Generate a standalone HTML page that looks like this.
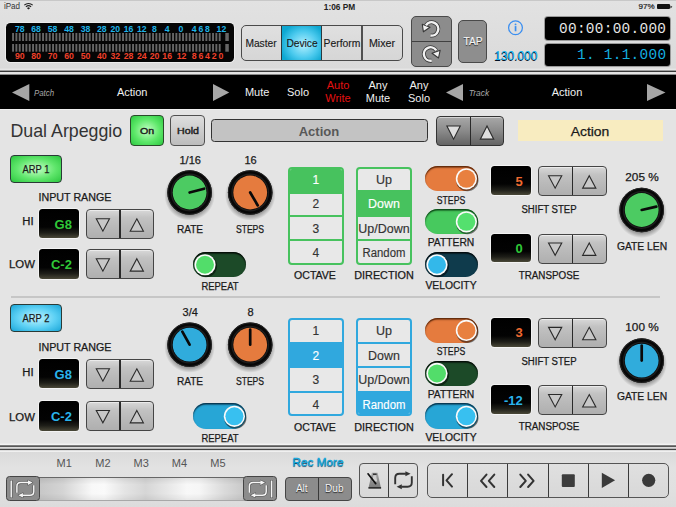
<!DOCTYPE html><html><head><meta charset="utf-8"><style>
html,body{margin:0;padding:0;}
body{width:676px;height:507px;overflow:hidden;position:relative;background:#e4e4e4;font-family:"Liberation Sans", sans-serif;}
div{box-sizing:border-box;}
svg{position:absolute;overflow:visible;}
</style></head><body>
<div style="position:absolute;left:0px;top:0px;width:676px;height:70px;background:linear-gradient(#e2e2e2,#dadada);"></div>
<div style="position:absolute;left:0px;top:0px;width:676px;height:1px;background:#c8c8c8;"></div>
<svg style="left:0;top:66px" width="676" height="12" viewBox="0 66 676 12"><rect x="0" y="68.6" width="676" height="2" fill="#e6e6e6"/><rect x="0" y="70.6" width="676" height="1.5" fill="#383838"/><rect x="0" y="72.1" width="676" height="2.5" fill="#e4e4e4"/><rect x="0" y="74.6" width="676" height="3.4" fill="#000"/></svg>
<div style="position:absolute;left:0px;top:75px;width:676px;height:34px;background:#000;"></div>
<div style="position:absolute;left:0px;top:109px;width:676px;height:1px;background:#efefef;"></div>
<div style="position:absolute;left:-88.2px;top:2.3499999999999996px;width:200px;text-align:center;font-size:8.5px;line-height:8.5px;color:#333;font-weight:normal;white-space:nowrap;transform:scaleX(0.949);">iPad</div>
<svg style="left:24px;top:3px" width="9" height="7" viewBox="0 0 9 7"><path d="M0.3 2.2 A6 6 0 0 1 8.7 2.2" stroke="#222" stroke-width="1.1" fill="none"/><path d="M1.9 3.9 A3.8 3.8 0 0 1 7.1 3.9" stroke="#222" stroke-width="1.1" fill="none"/><path d="M4.5 6.6 L3 5.2 A2 2 0 0 1 6 5.2 Z" fill="#222"/></svg>
<div style="position:absolute;left:309.5px;top:2px;width:60px;text-align:center;font-size:8.3px;line-height:8.3px;color:#222;font-weight:bold;white-space:nowrap;line-height:10px;">1:06 PM</div>
<div style="position:absolute;left:614.5px;top:2px;width:40px;text-align:right;font-size:8px;line-height:8px;color:#1a1a1a;font-weight:normal;white-space:nowrap;line-height:10px;-webkit-text-stroke:0.2px #1a1a1a;">97%</div>
<div style="position:absolute;left:656.5px;top:4.3px;width:13.5px;height:5px;background:#111;border-radius:1px;"></div>
<svg style="left:670px;top:5px" width="4" height="4" viewBox="0 0 4 4"><path d="M0.4 0.4 L2.4 1.8 L0.4 3.4 Z" fill="#333"/></svg>
<div style="position:absolute;left:6.2px;top:23.2px;width:227.8px;height:38.4px;background:#050505;border-radius:4.5px;box-shadow:0 0 0 1px #ececec;"></div>
<svg style="left:0;top:0" width="676" height="70" viewBox="0 0 676 70"><rect x="12.100" y="33" width="1.9" height="8" fill="#666"/><rect x="12.100" y="44" width="1.9" height="7.7" fill="#666"/><rect x="15.433" y="33" width="1.9" height="8" fill="#666"/><rect x="15.433" y="44" width="1.9" height="7.7" fill="#666"/><rect x="18.766" y="33" width="1.9" height="8" fill="#666"/><rect x="18.766" y="44" width="1.9" height="7.7" fill="#666"/><rect x="22.099" y="33" width="1.9" height="8" fill="#666"/><rect x="22.099" y="44" width="1.9" height="7.7" fill="#666"/><rect x="25.432" y="33" width="1.9" height="8" fill="#666"/><rect x="25.432" y="44" width="1.9" height="7.7" fill="#666"/><rect x="28.765" y="33" width="1.9" height="8" fill="#666"/><rect x="28.765" y="44" width="1.9" height="7.7" fill="#666"/><rect x="32.098" y="33" width="1.9" height="8" fill="#666"/><rect x="32.098" y="44" width="1.9" height="7.7" fill="#666"/><rect x="35.431" y="33" width="1.9" height="8" fill="#666"/><rect x="35.431" y="44" width="1.9" height="7.7" fill="#666"/><rect x="38.764" y="33" width="1.9" height="8" fill="#666"/><rect x="38.764" y="44" width="1.9" height="7.7" fill="#666"/><rect x="42.097" y="33" width="1.9" height="8" fill="#666"/><rect x="42.097" y="44" width="1.9" height="7.7" fill="#666"/><rect x="45.430" y="33" width="1.9" height="8" fill="#666"/><rect x="45.430" y="44" width="1.9" height="7.7" fill="#666"/><rect x="48.763" y="33" width="1.9" height="8" fill="#666"/><rect x="48.763" y="44" width="1.9" height="7.7" fill="#666"/><rect x="52.096" y="33" width="1.9" height="8" fill="#666"/><rect x="52.096" y="44" width="1.9" height="7.7" fill="#666"/><rect x="55.429" y="33" width="1.9" height="8" fill="#666"/><rect x="55.429" y="44" width="1.9" height="7.7" fill="#666"/><rect x="58.762" y="33" width="1.9" height="8" fill="#666"/><rect x="58.762" y="44" width="1.9" height="7.7" fill="#666"/><rect x="62.095" y="33" width="1.9" height="8" fill="#666"/><rect x="62.095" y="44" width="1.9" height="7.7" fill="#666"/><rect x="65.428" y="33" width="1.9" height="8" fill="#666"/><rect x="65.428" y="44" width="1.9" height="7.7" fill="#666"/><rect x="68.761" y="33" width="1.9" height="8" fill="#666"/><rect x="68.761" y="44" width="1.9" height="7.7" fill="#666"/><rect x="72.094" y="33" width="1.9" height="8" fill="#666"/><rect x="72.094" y="44" width="1.9" height="7.7" fill="#666"/><rect x="75.427" y="33" width="1.9" height="8" fill="#666"/><rect x="75.427" y="44" width="1.9" height="7.7" fill="#666"/><rect x="78.760" y="33" width="1.9" height="8" fill="#666"/><rect x="78.760" y="44" width="1.9" height="7.7" fill="#666"/><rect x="82.093" y="33" width="1.9" height="8" fill="#666"/><rect x="82.093" y="44" width="1.9" height="7.7" fill="#666"/><rect x="85.426" y="33" width="1.9" height="8" fill="#666"/><rect x="85.426" y="44" width="1.9" height="7.7" fill="#666"/><rect x="88.759" y="33" width="1.9" height="8" fill="#666"/><rect x="88.759" y="44" width="1.9" height="7.7" fill="#666"/><rect x="92.092" y="33" width="1.9" height="8" fill="#666"/><rect x="92.092" y="44" width="1.9" height="7.7" fill="#666"/><rect x="95.425" y="33" width="1.9" height="8" fill="#666"/><rect x="95.425" y="44" width="1.9" height="7.7" fill="#666"/><rect x="98.758" y="33" width="1.9" height="8" fill="#666"/><rect x="98.758" y="44" width="1.9" height="7.7" fill="#666"/><rect x="102.091" y="33" width="1.9" height="8" fill="#666"/><rect x="102.091" y="44" width="1.9" height="7.7" fill="#666"/><rect x="105.424" y="33" width="1.9" height="8" fill="#666"/><rect x="105.424" y="44" width="1.9" height="7.7" fill="#666"/><rect x="108.757" y="33" width="1.9" height="8" fill="#666"/><rect x="108.757" y="44" width="1.9" height="7.7" fill="#666"/><rect x="112.090" y="33" width="1.9" height="8" fill="#666"/><rect x="112.090" y="44" width="1.9" height="7.7" fill="#666"/><rect x="115.423" y="33" width="1.9" height="8" fill="#666"/><rect x="115.423" y="44" width="1.9" height="7.7" fill="#666"/><rect x="118.756" y="33" width="1.9" height="8" fill="#666"/><rect x="118.756" y="44" width="1.9" height="7.7" fill="#666"/><rect x="122.089" y="33" width="1.9" height="8" fill="#666"/><rect x="122.089" y="44" width="1.9" height="7.7" fill="#666"/><rect x="125.422" y="33" width="1.9" height="8" fill="#666"/><rect x="125.422" y="44" width="1.9" height="7.7" fill="#666"/><rect x="128.755" y="33" width="1.9" height="8" fill="#666"/><rect x="128.755" y="44" width="1.9" height="7.7" fill="#666"/><rect x="132.088" y="33" width="1.9" height="8" fill="#666"/><rect x="132.088" y="44" width="1.9" height="7.7" fill="#666"/><rect x="135.421" y="33" width="1.9" height="8" fill="#666"/><rect x="135.421" y="44" width="1.9" height="7.7" fill="#666"/><rect x="138.754" y="33" width="1.9" height="8" fill="#666"/><rect x="138.754" y="44" width="1.9" height="7.7" fill="#666"/><rect x="142.087" y="33" width="1.9" height="8" fill="#666"/><rect x="142.087" y="44" width="1.9" height="7.7" fill="#666"/><rect x="145.420" y="33" width="1.9" height="8" fill="#666"/><rect x="145.420" y="44" width="1.9" height="7.7" fill="#666"/><rect x="148.753" y="33" width="1.9" height="8" fill="#666"/><rect x="148.753" y="44" width="1.9" height="7.7" fill="#666"/><rect x="152.086" y="33" width="1.9" height="8" fill="#666"/><rect x="152.086" y="44" width="1.9" height="7.7" fill="#666"/><rect x="155.419" y="33" width="1.9" height="8" fill="#666"/><rect x="155.419" y="44" width="1.9" height="7.7" fill="#666"/><rect x="158.752" y="33" width="1.9" height="8" fill="#666"/><rect x="158.752" y="44" width="1.9" height="7.7" fill="#666"/><rect x="162.085" y="33" width="1.9" height="8" fill="#666"/><rect x="162.085" y="44" width="1.9" height="7.7" fill="#666"/><rect x="165.418" y="33" width="1.9" height="8" fill="#666"/><rect x="165.418" y="44" width="1.9" height="7.7" fill="#666"/><rect x="168.751" y="33" width="1.9" height="8" fill="#666"/><rect x="168.751" y="44" width="1.9" height="7.7" fill="#666"/><rect x="172.084" y="33" width="1.9" height="8" fill="#666"/><rect x="172.084" y="44" width="1.9" height="7.7" fill="#666"/><rect x="175.417" y="33" width="1.9" height="8" fill="#666"/><rect x="175.417" y="44" width="1.9" height="7.7" fill="#666"/><rect x="178.750" y="33" width="1.9" height="8" fill="#666"/><rect x="178.750" y="44" width="1.9" height="7.7" fill="#666"/><rect x="182.083" y="33" width="1.9" height="8" fill="#666"/><rect x="182.083" y="44" width="1.9" height="7.7" fill="#666"/><rect x="185.416" y="33" width="1.9" height="8" fill="#666"/><rect x="185.416" y="44" width="1.9" height="7.7" fill="#666"/><rect x="188.749" y="33" width="1.9" height="8" fill="#666"/><rect x="188.749" y="44" width="1.9" height="7.7" fill="#666"/><rect x="192.082" y="33" width="1.9" height="8" fill="#666"/><rect x="192.082" y="44" width="1.9" height="7.7" fill="#666"/><rect x="195.415" y="33" width="1.9" height="8" fill="#666"/><rect x="195.415" y="44" width="1.9" height="7.7" fill="#666"/><rect x="198.748" y="33" width="1.9" height="8" fill="#666"/><rect x="198.748" y="44" width="1.9" height="7.7" fill="#666"/><rect x="202.081" y="33" width="1.9" height="8" fill="#666"/><rect x="202.081" y="44" width="1.9" height="7.7" fill="#666"/><rect x="205.414" y="33" width="1.9" height="8" fill="#666"/><rect x="205.414" y="44" width="1.9" height="7.7" fill="#666"/><rect x="208.747" y="33" width="1.9" height="8" fill="#666"/><rect x="208.747" y="44" width="1.9" height="7.7" fill="#666"/><rect x="212.080" y="33" width="1.9" height="8" fill="#666"/><rect x="212.080" y="44" width="1.9" height="7.7" fill="#666"/><rect x="215.413" y="33" width="1.9" height="8" fill="#666"/><rect x="215.413" y="44" width="1.9" height="7.7" fill="#666"/><rect x="218.746" y="33" width="1.9" height="8" fill="#666"/><rect x="218.746" y="44" width="1.9" height="7.7" fill="#666"/><rect x="225.3" y="33" width="3.5" height="8" fill="#666"/><rect x="225.3" y="44" width="3.5" height="7.7" fill="#666"/></svg>
<div style="position:absolute;left:-80.2px;top:24.549999999999997px;width:200px;text-align:center;font-size:8.7px;line-height:8.7px;color:#1fb4e8;font-weight:bold;white-space:nowrap;">78</div>
<div style="position:absolute;left:-64.0px;top:24.549999999999997px;width:200px;text-align:center;font-size:8.7px;line-height:8.7px;color:#1fb4e8;font-weight:bold;white-space:nowrap;">68</div>
<div style="position:absolute;left:-47.4px;top:24.549999999999997px;width:200px;text-align:center;font-size:8.7px;line-height:8.7px;color:#1fb4e8;font-weight:bold;white-space:nowrap;">58</div>
<div style="position:absolute;left:-31.0px;top:24.549999999999997px;width:200px;text-align:center;font-size:8.7px;line-height:8.7px;color:#1fb4e8;font-weight:bold;white-space:nowrap;">48</div>
<div style="position:absolute;left:-14.5px;top:24.549999999999997px;width:200px;text-align:center;font-size:8.7px;line-height:8.7px;color:#1fb4e8;font-weight:bold;white-space:nowrap;">38</div>
<div style="position:absolute;left:1.7999999999999972px;top:24.549999999999997px;width:200px;text-align:center;font-size:8.7px;line-height:8.7px;color:#1fb4e8;font-weight:bold;white-space:nowrap;">28</div>
<div style="position:absolute;left:15.299999999999997px;top:24.549999999999997px;width:200px;text-align:center;font-size:8.7px;line-height:8.7px;color:#1fb4e8;font-weight:bold;white-space:nowrap;">20</div>
<div style="position:absolute;left:28.5px;top:24.549999999999997px;width:200px;text-align:center;font-size:8.7px;line-height:8.7px;color:#1fb4e8;font-weight:bold;white-space:nowrap;">16</div>
<div style="position:absolute;left:41.80000000000001px;top:24.549999999999997px;width:200px;text-align:center;font-size:8.7px;line-height:8.7px;color:#1fb4e8;font-weight:bold;white-space:nowrap;">12</div>
<div style="position:absolute;left:54.5px;top:24.549999999999997px;width:200px;text-align:center;font-size:8.7px;line-height:8.7px;color:#1fb4e8;font-weight:bold;white-space:nowrap;">8</div>
<div style="position:absolute;left:67.19999999999999px;top:24.549999999999997px;width:200px;text-align:center;font-size:8.7px;line-height:8.7px;color:#1fb4e8;font-weight:bold;white-space:nowrap;">4</div>
<div style="position:absolute;left:81.0px;top:24.549999999999997px;width:200px;text-align:center;font-size:8.7px;line-height:8.7px;color:#1fb4e8;font-weight:bold;white-space:nowrap;">0</div>
<div style="position:absolute;left:94.19999999999999px;top:24.549999999999997px;width:200px;text-align:center;font-size:8.7px;line-height:8.7px;color:#1fb4e8;font-weight:bold;white-space:nowrap;">4</div>
<div style="position:absolute;left:101.0px;top:24.549999999999997px;width:200px;text-align:center;font-size:8.7px;line-height:8.7px;color:#1fb4e8;font-weight:bold;white-space:nowrap;">6</div>
<div style="position:absolute;left:107.5px;top:24.549999999999997px;width:200px;text-align:center;font-size:8.7px;line-height:8.7px;color:#1fb4e8;font-weight:bold;white-space:nowrap;">8</div>
<div style="position:absolute;left:121.4px;top:24.549999999999997px;width:200px;text-align:center;font-size:8.7px;line-height:8.7px;color:#1fb4e8;font-weight:bold;white-space:nowrap;">12</div>
<div style="position:absolute;left:-80.2px;top:52.449999999999996px;width:200px;text-align:center;font-size:8.7px;line-height:8.7px;color:#f0402a;font-weight:bold;white-space:nowrap;">90</div>
<div style="position:absolute;left:-64.0px;top:52.449999999999996px;width:200px;text-align:center;font-size:8.7px;line-height:8.7px;color:#f0402a;font-weight:bold;white-space:nowrap;">80</div>
<div style="position:absolute;left:-47.4px;top:52.449999999999996px;width:200px;text-align:center;font-size:8.7px;line-height:8.7px;color:#f0402a;font-weight:bold;white-space:nowrap;">70</div>
<div style="position:absolute;left:-31.0px;top:52.449999999999996px;width:200px;text-align:center;font-size:8.7px;line-height:8.7px;color:#f0402a;font-weight:bold;white-space:nowrap;">60</div>
<div style="position:absolute;left:-14.5px;top:52.449999999999996px;width:200px;text-align:center;font-size:8.7px;line-height:8.7px;color:#f0402a;font-weight:bold;white-space:nowrap;">50</div>
<div style="position:absolute;left:1.7999999999999972px;top:52.449999999999996px;width:200px;text-align:center;font-size:8.7px;line-height:8.7px;color:#f0402a;font-weight:bold;white-space:nowrap;">40</div>
<div style="position:absolute;left:15.299999999999997px;top:52.449999999999996px;width:200px;text-align:center;font-size:8.7px;line-height:8.7px;color:#f0402a;font-weight:bold;white-space:nowrap;">32</div>
<div style="position:absolute;left:28.5px;top:52.449999999999996px;width:200px;text-align:center;font-size:8.7px;line-height:8.7px;color:#f0402a;font-weight:bold;white-space:nowrap;">28</div>
<div style="position:absolute;left:41.80000000000001px;top:52.449999999999996px;width:200px;text-align:center;font-size:8.7px;line-height:8.7px;color:#f0402a;font-weight:bold;white-space:nowrap;">24</div>
<div style="position:absolute;left:54.5px;top:52.449999999999996px;width:200px;text-align:center;font-size:8.7px;line-height:8.7px;color:#f0402a;font-weight:bold;white-space:nowrap;">20</div>
<div style="position:absolute;left:67.19999999999999px;top:52.449999999999996px;width:200px;text-align:center;font-size:8.7px;line-height:8.7px;color:#f0402a;font-weight:bold;white-space:nowrap;">16</div>
<div style="position:absolute;left:81.5px;top:52.449999999999996px;width:200px;text-align:center;font-size:8.7px;line-height:8.7px;color:#f0402a;font-weight:bold;white-space:nowrap;">12</div>
<div style="position:absolute;left:94.19999999999999px;top:52.449999999999996px;width:200px;text-align:center;font-size:8.7px;line-height:8.7px;color:#f0402a;font-weight:bold;white-space:nowrap;">8</div>
<div style="position:absolute;left:101.0px;top:52.449999999999996px;width:200px;text-align:center;font-size:8.7px;line-height:8.7px;color:#f0402a;font-weight:bold;white-space:nowrap;">6</div>
<div style="position:absolute;left:107.5px;top:52.449999999999996px;width:200px;text-align:center;font-size:8.7px;line-height:8.7px;color:#f0402a;font-weight:bold;white-space:nowrap;">4</div>
<div style="position:absolute;left:114.19999999999999px;top:52.449999999999996px;width:200px;text-align:center;font-size:8.7px;line-height:8.7px;color:#f0402a;font-weight:bold;white-space:nowrap;">2</div>
<div style="position:absolute;left:120.80000000000001px;top:52.449999999999996px;width:200px;text-align:center;font-size:8.7px;line-height:8.7px;color:#f0402a;font-weight:bold;white-space:nowrap;">0</div>
<div style="position:absolute;left:240.8px;top:25.4px;width:162px;height:35.4px;border:1.2px solid #4a4a4a;border-radius:5px;background:linear-gradient(#e0e0e0,#d6d6d6);overflow:hidden;"><div style="position:absolute;left:39.3px;top:0;width:41px;height:100%;background:radial-gradient(ellipse 60% 65% at 55% 55%,#b4f0ff 0%,#4ccaee 60%,#0ea8d2 100%);border-left:1.2px solid #2a3a40;border-right:1.2px solid #2a3a40;"></div><div style="position:absolute;left:119.6px;top:0;width:1.2px;height:100%;background:#505050;"></div></div>
<div style="position:absolute;left:160.8px;top:37.7px;width:200px;text-align:center;font-size:11px;line-height:11px;color:#1a1a1a;font-weight:normal;white-space:nowrap;-webkit-text-stroke:0.15px #1a1a1a;transform:scaleX(0.929);">Master</div>
<div style="position:absolute;left:201.8px;top:37.7px;width:200px;text-align:center;font-size:11px;line-height:11px;color:#1a1a1a;font-weight:normal;white-space:nowrap;-webkit-text-stroke:0.15px #1a1a1a;transform:scaleX(0.928);">Device</div>
<div style="position:absolute;left:242.0px;top:37.7px;width:200px;text-align:center;font-size:11px;line-height:11px;color:#1a1a1a;font-weight:normal;white-space:nowrap;-webkit-text-stroke:0.15px #1a1a1a;transform:scaleX(0.942);">Perform</div>
<div style="position:absolute;left:282.0px;top:37.7px;width:200px;text-align:center;font-size:11px;line-height:11px;color:#1a1a1a;font-weight:normal;white-space:nowrap;-webkit-text-stroke:0.15px #1a1a1a;transform:scaleX(0.973);">Mixer</div>
<div style="position:absolute;left:411px;top:16.2px;width:40.5px;height:51px;border:1px solid #4a4a4a;border-radius:5px;background:#8c8c8c;"><div style="position:absolute;left:0;top:24.3px;width:100%;height:1px;background:#404040;"></div></div>
<div style="position:absolute;left:458px;top:20.4px;width:29px;height:42.6px;border:1px solid #4a4a4a;border-radius:5px;background:#8e8e8e;"></div>
<div style="position:absolute;left:372.5px;top:35.7px;width:200px;text-align:center;font-size:11px;line-height:11px;color:#f4f4f4;font-weight:normal;white-space:nowrap;text-shadow:0 0.8px 1px #222;-webkit-text-stroke:0.2px #f4f4f4;transform:scaleX(0.929);">TAP</div>
<svg style="left:507px;top:20px" width="17" height="16" viewBox="0 0 17 16"><circle cx="8.5" cy="7.7" r="6.9" stroke="#3a8ef0" stroke-width="1.25" fill="none"/><rect x="7.7" y="6.1" width="1.7" height="5.2" fill="#3a8ef0"/><circle cx="8.55" cy="4.4" r="0.95" fill="#3a90f0"/></svg>
<div style="position:absolute;left:415.79999999999995px;top:49.6px;width:200px;text-align:center;font-size:12px;line-height:12px;color:#14b4ee;font-weight:normal;white-space:nowrap;text-shadow:-0.4px 0.6px 0.6px #012;transform:scaleX(0.995);">130.000</div>
<div style="position:absolute;left:545px;top:17px;width:124.5px;height:23px;background:#000;border-radius:3px;box-shadow:0 0 0 1px #9a9a9a;"></div>
<div style="position:absolute;left:545px;top:43.5px;width:124.5px;height:22.5px;background:#000;border-radius:3px;box-shadow:0 0 0 1px #9a9a9a;"></div>
<div style="position:absolute;left:558.90px;top:22.00px;font-family:'Liberation Mono',monospace;font-size:14.4px;line-height:14.4px;color:#e6e6e6;white-space:nowrap;"><span style="display:inline-block;width:8.95px;text-align:center;">0</span><span style="display:inline-block;width:8.95px;text-align:center;">0</span><span style="display:inline-block;width:8.95px;text-align:center;">:</span><span style="display:inline-block;width:8.95px;text-align:center;">0</span><span style="display:inline-block;width:8.95px;text-align:center;">0</span><span style="display:inline-block;width:8.95px;text-align:center;">:</span><span style="display:inline-block;width:8.95px;text-align:center;">0</span><span style="display:inline-block;width:8.95px;text-align:center;">0</span><span style="display:inline-block;width:8.95px;text-align:center;">.</span><span style="display:inline-block;width:8.95px;text-align:center;">0</span><span style="display:inline-block;width:8.95px;text-align:center;">0</span><span style="display:inline-block;width:8.95px;text-align:center;">0</span></div>
<div style="position:absolute;left:576.80px;top:48.20px;font-family:'Liberation Mono',monospace;font-size:14.4px;line-height:14.4px;color:#14aee0;white-space:nowrap;"><span style="display:inline-block;width:8.95px;text-align:center;">1</span><span style="display:inline-block;width:8.95px;text-align:center;">.</span><span style="display:inline-block;width:8.95px;text-align:center;">&nbsp;</span><span style="display:inline-block;width:8.95px;text-align:center;">1</span><span style="display:inline-block;width:8.95px;text-align:center;">.</span><span style="display:inline-block;width:8.95px;text-align:center;">1</span><span style="display:inline-block;width:8.95px;text-align:center;">.</span><span style="display:inline-block;width:8.95px;text-align:center;">0</span><span style="display:inline-block;width:8.95px;text-align:center;">0</span><span style="display:inline-block;width:8.95px;text-align:center;">0</span></div>
<svg style="left:11.5px;top:83.5px" width="17.3" height="16.900000000000006" viewBox="0 0 17.3 16.900000000000006"><path d="M0 8.450000000000003 L17.3 0 L17.3 16.900000000000006 Z" fill="#a6a6a6"/></svg>
<div style="position:absolute;left:-55.6px;top:88.5px;width:200px;text-align:center;font-size:9px;line-height:9px;color:#a8a8a8;font-weight:normal;white-space:nowrap;font-style:italic;transform:scaleX(0.875);">Patch</div>
<div style="position:absolute;left:32.19999999999999px;top:86.5px;width:200px;text-align:center;font-size:11px;line-height:11px;color:#f0f0f0;font-weight:normal;white-space:nowrap;">Action</div>
<svg style="left:212.7px;top:83.5px" width="16.30000000000001" height="16.900000000000006" viewBox="0 0 16.30000000000001 16.900000000000006"><path d="M16.30000000000001 8.450000000000003 L0 0 L0 16.900000000000006 Z" fill="#a6a6a6"/></svg>
<div style="position:absolute;left:157.2px;top:86.5px;width:200px;text-align:center;font-size:11px;line-height:11px;color:#f0f0f0;font-weight:normal;white-space:nowrap;">Mute</div>
<div style="position:absolute;left:198.0px;top:86.5px;width:200px;text-align:center;font-size:11px;line-height:11px;color:#f0f0f0;font-weight:normal;white-space:nowrap;">Solo</div>
<div style="position:absolute;left:238.0px;top:80.0px;width:200px;text-align:center;font-size:11px;line-height:11px;color:#e41010;font-weight:normal;white-space:nowrap;">Auto</div>
<div style="position:absolute;left:238.0px;top:93.0px;width:200px;text-align:center;font-size:11px;line-height:11px;color:#e41010;font-weight:normal;white-space:nowrap;">Write</div>
<div style="position:absolute;left:278.0px;top:80.0px;width:200px;text-align:center;font-size:11px;line-height:11px;color:#f0f0f0;font-weight:normal;white-space:nowrap;">Any</div>
<div style="position:absolute;left:278.0px;top:93.0px;width:200px;text-align:center;font-size:11px;line-height:11px;color:#f0f0f0;font-weight:normal;white-space:nowrap;">Mute</div>
<div style="position:absolute;left:319.0px;top:80.0px;width:200px;text-align:center;font-size:11px;line-height:11px;color:#f0f0f0;font-weight:normal;white-space:nowrap;">Any</div>
<div style="position:absolute;left:319.0px;top:93.0px;width:200px;text-align:center;font-size:11px;line-height:11px;color:#f0f0f0;font-weight:normal;white-space:nowrap;">Solo</div>
<svg style="left:445.8px;top:83.5px" width="17.0" height="16.900000000000006" viewBox="0 0 17.0 16.900000000000006"><path d="M0 8.450000000000003 L17.0 0 L17.0 16.900000000000006 Z" fill="#a6a6a6"/></svg>
<div style="position:absolute;left:379.4px;top:88.5px;width:200px;text-align:center;font-size:9px;line-height:9px;color:#a8a8a8;font-weight:normal;white-space:nowrap;font-style:italic;transform:scaleX(0.937);">Track</div>
<div style="position:absolute;left:467.0px;top:86.5px;width:200px;text-align:center;font-size:11px;line-height:11px;color:#f0f0f0;font-weight:normal;white-space:nowrap;">Action</div>
<svg style="left:647px;top:83.5px" width="18.5" height="16.900000000000006" viewBox="0 0 18.5 16.900000000000006"><path d="M18.5 8.450000000000003 L0 0 L0 16.900000000000006 Z" fill="#a6a6a6"/></svg>
<div style="position:absolute;left:10.5px;top:120.6px;font-size:17.8px;line-height:17.8px;color:#333;font-weight:normal;white-space:nowrap;line-height:20px;">Dual Arpeggio</div>
<div style="position:absolute;left:129.7px;top:115px;width:34.8px;height:31px;border:1px solid #2a4a2a;border-radius:4px;background:radial-gradient(ellipse at 50% 50%,#c4ffc4 0%,#5ee86a 55%,#2cc840 100%);"></div>
<div style="position:absolute;left:47.30000000000001px;top:126.2px;width:200px;text-align:center;font-size:9.6px;line-height:9.6px;color:#1a1a1a;font-weight:normal;white-space:nowrap;-webkit-text-stroke:0.45px #1a1a1a;transform:scaleX(1.105);">On</div>
<div style="position:absolute;left:170.3px;top:115px;width:34.3px;height:31px;border:1px solid #505050;border-radius:4px;background:linear-gradient(#dedede,#bcbcbc);"></div>
<div style="position:absolute;left:87.5px;top:126.2px;width:200px;text-align:center;font-size:9.6px;line-height:9.6px;color:#222;font-weight:normal;white-space:nowrap;-webkit-text-stroke:0.45px #222;transform:scaleX(1.107);">Hold</div>
<div style="position:absolute;left:211.2px;top:119.2px;width:216.8px;height:22.4px;border:1.5px solid #333;border-radius:3.5px;background:#c3c3c3;"></div>
<div style="position:absolute;left:219.39999999999998px;top:124.80000000000001px;width:200px;text-align:center;font-size:13px;line-height:13px;color:#585858;font-weight:bold;white-space:nowrap;transform:scaleX(1.003);">Action</div>
<div style="position:absolute;left:436.4px;top:116.2px;width:67.5px;height:30.10000000000001px;border:1px solid #333;border-radius:4px;background:linear-gradient(#a8a8a8,#8a8a8a 50%,#646464);box-shadow:inset 0 1px 0 rgba(255,255,255,0.5);"><div style="position:absolute;left:32.15px;top:0;width:1.6px;height:100%;background:#2a2a2a;"></div></div>
<div style="position:absolute;left:517.5px;top:119.5px;width:145px;height:21.5px;background:#f8ecc0;"></div>
<div style="position:absolute;left:490.20000000000005px;top:125.0px;width:200px;text-align:center;font-size:13px;line-height:13px;color:#1a1a1a;font-weight:normal;white-space:nowrap;-webkit-text-stroke:0.25px #1a1a1a;transform:scaleX(1.069);">Action</div>
<div style="position:absolute;left:10.1px;top:154.7px;width:51.5px;height:28px;border:1px solid #2a3a36;border-radius:4px;background:radial-gradient(ellipse at 50% 50%,#c8ffc8 0%,#60e66c 55%,#2ac63e 100%);"></div>
<div style="position:absolute;left:-64.1px;top:164.8px;width:200px;text-align:center;font-size:10px;line-height:10px;color:#1a1a1a;font-weight:normal;white-space:nowrap;-webkit-text-stroke:0.25px #1a1a1a;transform:scaleX(0.931);">ARP 1</div>
<div style="position:absolute;left:-25.0px;top:193.0px;width:200px;text-align:center;font-size:10px;line-height:10px;color:#1a1a1a;font-weight:normal;white-space:nowrap;-webkit-text-stroke:0.25px #1a1a1a;transform:scaleX(1.069);">INPUT RANGE</div>
<div style="position:absolute;left:-72.0px;top:216.8px;width:200px;text-align:center;font-size:10px;line-height:10px;color:#1a1a1a;font-weight:normal;white-space:nowrap;-webkit-text-stroke:0.25px #1a1a1a;transform:scaleX(1.130);">HI</div>
<div style="position:absolute;left:39px;top:208.9px;width:39.900000000000006px;height:29.299999999999983px;border-radius:3.5px;background:linear-gradient(#000 0%,#030303 62%,#1e1e18 82%,#4a4838 100%);box-shadow:0 0 0 1px rgba(255,255,255,0.55);"></div>
<div style="position:absolute;left:11.900000000000006px;top:217.65px;width:60px;text-align:right;font-size:13px;line-height:13px;color:#30c838;font-weight:bold;white-space:nowrap;line-height:14px;">G8</div>
<div style="position:absolute;left:85.6px;top:209.3px;width:68.70000000000002px;height:30.19999999999999px;border:1px solid #454545;border-radius:4px;background:linear-gradient(#d8d8d8 0%,#c2c2c2 28%,#b9b9b9 60%,#afafaf 100%);box-shadow:inset 0 1px 0 rgba(255,255,255,0.5);"><div style="position:absolute;left:32.75000000000001px;top:0;width:1.6px;height:100%;background:#2a2a2a;"></div></div>
<div style="position:absolute;left:-78.5px;top:260.0px;width:200px;text-align:center;font-size:10px;line-height:10px;color:#1a1a1a;font-weight:normal;white-space:nowrap;-webkit-text-stroke:0.25px #1a1a1a;transform:scaleX(1.137);">LOW</div>
<div style="position:absolute;left:39px;top:249.3px;width:39.900000000000006px;height:29.5px;border-radius:3.5px;background:linear-gradient(#000 0%,#030303 62%,#1e1e18 82%,#4a4838 100%);box-shadow:0 0 0 1px rgba(255,255,255,0.55);"></div>
<div style="position:absolute;left:11.900000000000006px;top:258.15000000000003px;width:60px;text-align:right;font-size:13px;line-height:13px;color:#30c838;font-weight:bold;white-space:nowrap;line-height:14px;">C-2</div>
<div style="position:absolute;left:85.6px;top:249.3px;width:68.70000000000002px;height:30.099999999999966px;border:1px solid #454545;border-radius:4px;background:linear-gradient(#d8d8d8 0%,#c2c2c2 28%,#b9b9b9 60%,#afafaf 100%);box-shadow:inset 0 1px 0 rgba(255,255,255,0.5);"><div style="position:absolute;left:32.75000000000001px;top:0;width:1.6px;height:100%;background:#2a2a2a;"></div></div>
<div style="position:absolute;left:90.19999999999999px;top:155.0px;width:200px;text-align:center;font-size:11px;line-height:11px;color:#1a1a1a;font-weight:normal;white-space:nowrap;-webkit-text-stroke:0.25px #1a1a1a;">1/16</div>
<div style="position:absolute;left:150.5px;top:155.0px;width:200px;text-align:center;font-size:11px;line-height:11px;color:#1a1a1a;font-weight:normal;white-space:nowrap;-webkit-text-stroke:0.25px #1a1a1a;">16</div>
<div style="position:absolute;left:89.6px;top:224.9px;width:200px;text-align:center;font-size:10px;line-height:10px;color:#1a1a1a;font-weight:normal;white-space:nowrap;-webkit-text-stroke:0.25px #1a1a1a;transform:scaleX(1.011);">RATE</div>
<div style="position:absolute;left:150.0px;top:224.9px;width:200px;text-align:center;font-size:10px;line-height:10px;color:#1a1a1a;font-weight:normal;white-space:nowrap;-webkit-text-stroke:0.25px #1a1a1a;transform:scaleX(0.860);">STEPS</div>
<div style="position:absolute;left:193.2px;top:251.8px;width:53px;height:25.3px;border-radius:13px;background:#1c4a28;box-shadow:inset 0 1.5px 1.5px rgba(0,0,0,0.9);"></div>
<div style="position:absolute;left:119.6px;top:281.9px;width:200px;text-align:center;font-size:10px;line-height:10px;color:#1a1a1a;font-weight:normal;white-space:nowrap;-webkit-text-stroke:0.25px #1a1a1a;transform:scaleX(0.944);">REPEAT</div>
<div style="position:absolute;left:287.9px;top:166.7px;width:56px;height:97.9px;border:2px solid #47c25e;border-radius:4px;background:#e8e8e8;overflow:hidden;"><div style="position:absolute;left:0;top:-2px;width:100%;height:27.8px;background:#47c25e;"></div><div style="position:absolute;left:0;top:21.8px;width:100%;height:2px;background:#47c25e;"></div><div style="position:absolute;left:0;top:46.1px;width:100%;height:2px;background:#47c25e;"></div><div style="position:absolute;left:0;top:70.4px;width:100%;height:2px;background:#47c25e;"></div></div>
<div style="position:absolute;left:215.89999999999998px;top:173.7px;width:200px;text-align:center;font-size:12px;line-height:12px;color:#fff;font-weight:normal;white-space:nowrap;-webkit-text-stroke:0.15px #fff;">1</div>
<div style="position:absolute;left:215.89999999999998px;top:198.24999999999997px;width:200px;text-align:center;font-size:12px;line-height:12px;color:#333;font-weight:normal;white-space:nowrap;-webkit-text-stroke:0.15px #333;">2</div>
<div style="position:absolute;left:215.89999999999998px;top:222.54999999999998px;width:200px;text-align:center;font-size:12px;line-height:12px;color:#333;font-weight:normal;white-space:nowrap;-webkit-text-stroke:0.15px #333;">3</div>
<div style="position:absolute;left:215.89999999999998px;top:246.95px;width:200px;text-align:center;font-size:12px;line-height:12px;color:#333;font-weight:normal;white-space:nowrap;-webkit-text-stroke:0.15px #333;">4</div>
<div style="position:absolute;left:215.39999999999998px;top:271.0px;width:200px;text-align:center;font-size:10px;line-height:10px;color:#1a1a1a;font-weight:normal;white-space:nowrap;-webkit-text-stroke:0.25px #1a1a1a;transform:scaleX(1.056);">OCTAVE</div>
<div style="position:absolute;left:356.2px;top:166.7px;width:56px;height:97.9px;border:2px solid #47c25e;border-radius:4px;background:#e8e8e8;overflow:hidden;"><div style="position:absolute;left:0;top:21.8px;width:100%;height:26.3px;background:#47c25e;"></div><div style="position:absolute;left:0;top:21.8px;width:100%;height:2px;background:#47c25e;"></div><div style="position:absolute;left:0;top:46.1px;width:100%;height:2px;background:#47c25e;"></div><div style="position:absolute;left:0;top:70.4px;width:100%;height:2px;background:#47c25e;"></div></div>
<div style="position:absolute;left:284.2px;top:173.7px;width:200px;text-align:center;font-size:12px;line-height:12px;color:#333;font-weight:normal;white-space:nowrap;-webkit-text-stroke:0.15px #333;transform:scaleX(1.043);">Up</div>
<div style="position:absolute;left:284.2px;top:198.24999999999997px;width:200px;text-align:center;font-size:12px;line-height:12px;color:#fff;font-weight:normal;white-space:nowrap;-webkit-text-stroke:0.15px #fff;transform:scaleX(1.036);">Down</div>
<div style="position:absolute;left:284.2px;top:222.54999999999998px;width:200px;text-align:center;font-size:12px;line-height:12px;color:#333;font-weight:normal;white-space:nowrap;-webkit-text-stroke:0.15px #333;transform:scaleX(1.039);">Up/Down</div>
<div style="position:absolute;left:284.2px;top:246.95px;width:200px;text-align:center;font-size:12px;line-height:12px;color:#333;font-weight:normal;white-space:nowrap;-webkit-text-stroke:0.15px #333;transform:scaleX(0.944);">Random</div>
<div style="position:absolute;left:283.7px;top:271.0px;width:200px;text-align:center;font-size:10px;line-height:10px;color:#1a1a1a;font-weight:normal;white-space:nowrap;-webkit-text-stroke:0.25px #1a1a1a;transform:scaleX(1.081);">DIRECTION</div>
<div style="position:absolute;left:425.2px;top:165.9px;width:53px;height:25.3px;border-radius:13px;background:#e57b3e;box-shadow:inset 0 1.5px 1.5px rgba(70,25,0,0.9);"></div>
<div style="position:absolute;left:351.4px;top:195.6px;width:200px;text-align:center;font-size:10px;line-height:10px;color:#1a1a1a;font-weight:normal;white-space:nowrap;-webkit-text-stroke:0.25px #1a1a1a;transform:scaleX(0.869);">STEPS</div>
<div style="position:absolute;left:425.2px;top:208.9px;width:53px;height:25.3px;border-radius:13px;background:#47c95e;box-shadow:inset 0 1.5px 1.5px rgba(0,50,10,0.9);"></div>
<div style="position:absolute;left:351.4px;top:238.3px;width:200px;text-align:center;font-size:10px;line-height:10px;color:#1a1a1a;font-weight:normal;white-space:nowrap;-webkit-text-stroke:0.25px #1a1a1a;transform:scaleX(1.032);">PATTERN</div>
<div style="position:absolute;left:425.2px;top:251.8px;width:53px;height:25.3px;border-radius:13px;background:#0f3b4c;box-shadow:inset 0 1.5px 1.5px rgba(0,0,0,0.9);"></div>
<div style="position:absolute;left:351.1px;top:281.1px;width:200px;text-align:center;font-size:10px;line-height:10px;color:#1a1a1a;font-weight:normal;white-space:nowrap;-webkit-text-stroke:0.25px #1a1a1a;transform:scaleX(1.034);">VELOCITY</div>
<div style="position:absolute;left:491.4px;top:166.2px;width:39.700000000000045px;height:28.80000000000001px;border-radius:3.5px;background:linear-gradient(#000 0%,#030303 62%,#1e1e18 82%,#4a4838 100%);box-shadow:0 0 0 1px rgba(255,255,255,0.55);"></div>
<div style="position:absolute;left:462.70000000000005px;top:174.6px;width:60px;text-align:right;font-size:13px;line-height:13px;color:#f06a30;font-weight:bold;white-space:nowrap;line-height:14px;">5</div>
<div style="position:absolute;left:537.8px;top:166.2px;width:69.0px;height:30.30000000000001px;border:1px solid #454545;border-radius:4px;background:linear-gradient(#d8d8d8 0%,#c2c2c2 28%,#b9b9b9 60%,#afafaf 100%);box-shadow:inset 0 1px 0 rgba(255,255,255,0.5);"><div style="position:absolute;left:32.9px;top:0;width:1.6px;height:100%;background:#2a2a2a;"></div></div>
<div style="position:absolute;left:448.9px;top:205.4px;width:200px;text-align:center;font-size:10px;line-height:10px;color:#1a1a1a;font-weight:normal;white-space:nowrap;-webkit-text-stroke:0.25px #1a1a1a;transform:scaleX(0.956);">SHIFT STEP</div>
<div style="position:absolute;left:491.4px;top:233.5px;width:39.700000000000045px;height:28.80000000000001px;border-radius:3.5px;background:linear-gradient(#000 0%,#030303 62%,#1e1e18 82%,#4a4838 100%);box-shadow:0 0 0 1px rgba(255,255,255,0.55);"></div>
<div style="position:absolute;left:462.70000000000005px;top:241.9px;width:60px;text-align:right;font-size:13px;line-height:13px;color:#30c838;font-weight:bold;white-space:nowrap;line-height:14px;">0</div>
<div style="position:absolute;left:537.8px;top:233.5px;width:69.0px;height:30.100000000000023px;border:1px solid #454545;border-radius:4px;background:linear-gradient(#d8d8d8 0%,#c2c2c2 28%,#b9b9b9 60%,#afafaf 100%);box-shadow:inset 0 1px 0 rgba(255,255,255,0.5);"><div style="position:absolute;left:32.9px;top:0;width:1.6px;height:100%;background:#2a2a2a;"></div></div>
<div style="position:absolute;left:449.29999999999995px;top:270.6px;width:200px;text-align:center;font-size:10px;line-height:10px;color:#1a1a1a;font-weight:normal;white-space:nowrap;-webkit-text-stroke:0.25px #1a1a1a;transform:scaleX(0.984);">TRANSPOSE</div>
<div style="position:absolute;left:541.5px;top:171.5px;width:200px;text-align:center;font-size:11px;line-height:11px;color:#1a1a1a;font-weight:normal;white-space:nowrap;-webkit-text-stroke:0.25px #1a1a1a;transform:scaleX(1.072);">205 %</div>
<div style="position:absolute;left:541.5px;top:241.6px;width:200px;text-align:center;font-size:10px;line-height:10px;color:#1a1a1a;font-weight:normal;white-space:nowrap;-webkit-text-stroke:0.25px #1a1a1a;transform:scaleX(1.031);">GATE LEN</div>
<div style="position:absolute;left:10.6px;top:296px;width:649.4px;height:2px;background:#c6c6c6;"></div>
<div style="position:absolute;left:10.1px;top:303.7px;width:51.5px;height:28px;border:1px solid #2a3a36;border-radius:4px;background:radial-gradient(ellipse at 50% 50%,#c0f4ff 0%,#5cd0f4 55%,#1aa6d8 100%);"></div>
<div style="position:absolute;left:-64.1px;top:313.8px;width:200px;text-align:center;font-size:10px;line-height:10px;color:#1a1a1a;font-weight:normal;white-space:nowrap;-webkit-text-stroke:0.25px #1a1a1a;transform:scaleX(0.931);">ARP 2</div>
<div style="position:absolute;left:-25.0px;top:343.0px;width:200px;text-align:center;font-size:10px;line-height:10px;color:#1a1a1a;font-weight:normal;white-space:nowrap;-webkit-text-stroke:0.25px #1a1a1a;transform:scaleX(1.069);">INPUT RANGE</div>
<div style="position:absolute;left:-72.0px;top:367.85px;width:200px;text-align:center;font-size:10px;line-height:10px;color:#1a1a1a;font-weight:normal;white-space:nowrap;-webkit-text-stroke:0.25px #1a1a1a;transform:scaleX(1.130);">HI</div>
<div style="position:absolute;left:39px;top:358.9px;width:39.900000000000006px;height:29.30000000000001px;border-radius:3.5px;background:linear-gradient(#000 0%,#030303 62%,#1e1e18 82%,#4a4838 100%);box-shadow:0 0 0 1px rgba(255,255,255,0.55);"></div>
<div style="position:absolute;left:11.900000000000006px;top:367.65px;width:60px;text-align:right;font-size:13px;line-height:13px;color:#2ab4ec;font-weight:bold;white-space:nowrap;line-height:14px;">G8</div>
<div style="position:absolute;left:85.6px;top:359.3px;width:68.70000000000002px;height:30.19999999999999px;border:1px solid #454545;border-radius:4px;background:linear-gradient(#d8d8d8 0%,#c2c2c2 28%,#b9b9b9 60%,#afafaf 100%);box-shadow:inset 0 1px 0 rgba(255,255,255,0.5);"><div style="position:absolute;left:32.75000000000001px;top:0;width:1.6px;height:100%;background:#2a2a2a;"></div></div>
<div style="position:absolute;left:-78.5px;top:413.00462px;width:200px;text-align:center;font-size:10px;line-height:10px;color:#1a1a1a;font-weight:normal;white-space:nowrap;-webkit-text-stroke:0.25px #1a1a1a;transform:scaleX(1.137);">LOW</div>
<div style="position:absolute;left:39px;top:401.0px;width:39.900000000000006px;height:29.5px;border-radius:3.5px;background:linear-gradient(#000 0%,#030303 62%,#1e1e18 82%,#4a4838 100%);box-shadow:0 0 0 1px rgba(255,255,255,0.55);"></div>
<div style="position:absolute;left:11.900000000000006px;top:409.85px;width:60px;text-align:right;font-size:13px;line-height:13px;color:#2ab4ec;font-weight:bold;white-space:nowrap;line-height:14px;">C-2</div>
<div style="position:absolute;left:85.6px;top:401.0px;width:68.70000000000002px;height:30.099999999999966px;border:1px solid #454545;border-radius:4px;background:linear-gradient(#d8d8d8 0%,#c2c2c2 28%,#b9b9b9 60%,#afafaf 100%);box-shadow:inset 0 1px 0 rgba(255,255,255,0.5);"><div style="position:absolute;left:32.75000000000001px;top:0;width:1.6px;height:100%;background:#2a2a2a;"></div></div>
<div style="position:absolute;left:90.19999999999999px;top:306.6px;width:200px;text-align:center;font-size:11px;line-height:11px;color:#1a1a1a;font-weight:normal;white-space:nowrap;-webkit-text-stroke:0.25px #1a1a1a;">3/4</div>
<div style="position:absolute;left:150.5px;top:306.6px;width:200px;text-align:center;font-size:11px;line-height:11px;color:#1a1a1a;font-weight:normal;white-space:nowrap;-webkit-text-stroke:0.25px #1a1a1a;">8</div>
<div style="position:absolute;left:89.6px;top:377.1px;width:200px;text-align:center;font-size:10px;line-height:10px;color:#1a1a1a;font-weight:normal;white-space:nowrap;-webkit-text-stroke:0.25px #1a1a1a;transform:scaleX(1.011);">RATE</div>
<div style="position:absolute;left:150.0px;top:377.1px;width:200px;text-align:center;font-size:10px;line-height:10px;color:#1a1a1a;font-weight:normal;white-space:nowrap;-webkit-text-stroke:0.25px #1a1a1a;transform:scaleX(0.860);">STEPS</div>
<div style="position:absolute;left:193.2px;top:403.4px;width:53px;height:25.3px;border-radius:13px;background:#27a6d6;box-shadow:inset 0 1.5px 1.5px rgba(0,30,50,0.9);"></div>
<div style="position:absolute;left:119.6px;top:433.5px;width:200px;text-align:center;font-size:10px;line-height:10px;color:#1a1a1a;font-weight:normal;white-space:nowrap;-webkit-text-stroke:0.25px #1a1a1a;transform:scaleX(0.944);">REPEAT</div>
<div style="position:absolute;left:287.9px;top:318.29999999999995px;width:56px;height:97.9px;border:2px solid #30a8de;border-radius:4px;background:#e8e8e8;overflow:hidden;"><div style="position:absolute;left:0;top:21.8px;width:100%;height:26.3px;background:#30a8de;"></div><div style="position:absolute;left:0;top:21.8px;width:100%;height:2px;background:#30a8de;"></div><div style="position:absolute;left:0;top:46.1px;width:100%;height:2px;background:#30a8de;"></div><div style="position:absolute;left:0;top:70.4px;width:100%;height:2px;background:#30a8de;"></div></div>
<div style="position:absolute;left:215.89999999999998px;top:325.29999999999995px;width:200px;text-align:center;font-size:12px;line-height:12px;color:#333;font-weight:normal;white-space:nowrap;-webkit-text-stroke:0.15px #333;">1</div>
<div style="position:absolute;left:215.89999999999998px;top:349.84999999999997px;width:200px;text-align:center;font-size:12px;line-height:12px;color:#fff;font-weight:normal;white-space:nowrap;-webkit-text-stroke:0.15px #fff;">2</div>
<div style="position:absolute;left:215.89999999999998px;top:374.15px;width:200px;text-align:center;font-size:12px;line-height:12px;color:#333;font-weight:normal;white-space:nowrap;-webkit-text-stroke:0.15px #333;">3</div>
<div style="position:absolute;left:215.89999999999998px;top:398.54999999999995px;width:200px;text-align:center;font-size:12px;line-height:12px;color:#333;font-weight:normal;white-space:nowrap;-webkit-text-stroke:0.15px #333;">4</div>
<div style="position:absolute;left:215.39999999999998px;top:422.6px;width:200px;text-align:center;font-size:10px;line-height:10px;color:#1a1a1a;font-weight:normal;white-space:nowrap;-webkit-text-stroke:0.25px #1a1a1a;transform:scaleX(1.056);">OCTAVE</div>
<div style="position:absolute;left:356.2px;top:318.29999999999995px;width:56px;height:97.9px;border:2px solid #30a8de;border-radius:4px;background:#e8e8e8;overflow:hidden;"><div style="position:absolute;left:0;top:70.4px;width:100%;height:27.5px;background:#30a8de;"></div><div style="position:absolute;left:0;top:21.8px;width:100%;height:2px;background:#30a8de;"></div><div style="position:absolute;left:0;top:46.1px;width:100%;height:2px;background:#30a8de;"></div><div style="position:absolute;left:0;top:70.4px;width:100%;height:2px;background:#30a8de;"></div></div>
<div style="position:absolute;left:284.2px;top:325.29999999999995px;width:200px;text-align:center;font-size:12px;line-height:12px;color:#333;font-weight:normal;white-space:nowrap;-webkit-text-stroke:0.15px #333;transform:scaleX(1.043);">Up</div>
<div style="position:absolute;left:284.2px;top:349.84999999999997px;width:200px;text-align:center;font-size:12px;line-height:12px;color:#333;font-weight:normal;white-space:nowrap;-webkit-text-stroke:0.15px #333;transform:scaleX(1.036);">Down</div>
<div style="position:absolute;left:284.2px;top:374.15px;width:200px;text-align:center;font-size:12px;line-height:12px;color:#333;font-weight:normal;white-space:nowrap;-webkit-text-stroke:0.15px #333;transform:scaleX(1.039);">Up/Down</div>
<div style="position:absolute;left:284.2px;top:398.54999999999995px;width:200px;text-align:center;font-size:12px;line-height:12px;color:#fff;font-weight:normal;white-space:nowrap;-webkit-text-stroke:0.15px #fff;transform:scaleX(0.944);">Random</div>
<div style="position:absolute;left:283.7px;top:422.6px;width:200px;text-align:center;font-size:10px;line-height:10px;color:#1a1a1a;font-weight:normal;white-space:nowrap;-webkit-text-stroke:0.25px #1a1a1a;transform:scaleX(1.081);">DIRECTION</div>
<div style="position:absolute;left:425.2px;top:317.5px;width:53px;height:25.3px;border-radius:13px;background:#e57b3e;box-shadow:inset 0 1.5px 1.5px rgba(70,25,0,0.9);"></div>
<div style="position:absolute;left:351.4px;top:347.2px;width:200px;text-align:center;font-size:10px;line-height:10px;color:#1a1a1a;font-weight:normal;white-space:nowrap;-webkit-text-stroke:0.25px #1a1a1a;transform:scaleX(0.869);">STEPS</div>
<div style="position:absolute;left:425.2px;top:360.5px;width:53px;height:25.3px;border-radius:13px;background:#1c4a28;box-shadow:inset 0 1.5px 1.5px rgba(0,0,0,0.9);"></div>
<div style="position:absolute;left:351.4px;top:389.9px;width:200px;text-align:center;font-size:10px;line-height:10px;color:#1a1a1a;font-weight:normal;white-space:nowrap;-webkit-text-stroke:0.25px #1a1a1a;transform:scaleX(1.032);">PATTERN</div>
<div style="position:absolute;left:425.2px;top:403.4px;width:53px;height:25.3px;border-radius:13px;background:#27a6d6;box-shadow:inset 0 1.5px 1.5px rgba(0,30,50,0.9);"></div>
<div style="position:absolute;left:351.1px;top:432.70000000000005px;width:200px;text-align:center;font-size:10px;line-height:10px;color:#1a1a1a;font-weight:normal;white-space:nowrap;-webkit-text-stroke:0.25px #1a1a1a;transform:scaleX(1.034);">VELOCITY</div>
<div style="position:absolute;left:491.4px;top:317.79999999999995px;width:39.700000000000045px;height:28.800000000000068px;border-radius:3.5px;background:linear-gradient(#000 0%,#030303 62%,#1e1e18 82%,#4a4838 100%);box-shadow:0 0 0 1px rgba(255,255,255,0.55);"></div>
<div style="position:absolute;left:462.70000000000005px;top:326.2px;width:60px;text-align:right;font-size:13px;line-height:13px;color:#f06a30;font-weight:bold;white-space:nowrap;line-height:14px;">3</div>
<div style="position:absolute;left:537.8px;top:317.79999999999995px;width:69.0px;height:30.300000000000068px;border:1px solid #454545;border-radius:4px;background:linear-gradient(#d8d8d8 0%,#c2c2c2 28%,#b9b9b9 60%,#afafaf 100%);box-shadow:inset 0 1px 0 rgba(255,255,255,0.5);"><div style="position:absolute;left:32.9px;top:0;width:1.6px;height:100%;background:#2a2a2a;"></div></div>
<div style="position:absolute;left:448.9px;top:357.0px;width:200px;text-align:center;font-size:10px;line-height:10px;color:#1a1a1a;font-weight:normal;white-space:nowrap;-webkit-text-stroke:0.25px #1a1a1a;transform:scaleX(0.956);">SHIFT STEP</div>
<div style="position:absolute;left:491.4px;top:385.1px;width:39.700000000000045px;height:28.799999999999955px;border-radius:3.5px;background:linear-gradient(#000 0%,#030303 62%,#1e1e18 82%,#4a4838 100%);box-shadow:0 0 0 1px rgba(255,255,255,0.55);"></div>
<div style="position:absolute;left:462.70000000000005px;top:393.5px;width:60px;text-align:right;font-size:13px;line-height:13px;color:#2ab4ec;font-weight:bold;white-space:nowrap;line-height:14px;">-12</div>
<div style="position:absolute;left:537.8px;top:385.1px;width:69.0px;height:30.100000000000023px;border:1px solid #454545;border-radius:4px;background:linear-gradient(#d8d8d8 0%,#c2c2c2 28%,#b9b9b9 60%,#afafaf 100%);box-shadow:inset 0 1px 0 rgba(255,255,255,0.5);"><div style="position:absolute;left:32.9px;top:0;width:1.6px;height:100%;background:#2a2a2a;"></div></div>
<div style="position:absolute;left:449.29999999999995px;top:422.20000000000005px;width:200px;text-align:center;font-size:10px;line-height:10px;color:#1a1a1a;font-weight:normal;white-space:nowrap;-webkit-text-stroke:0.25px #1a1a1a;transform:scaleX(0.984);">TRANSPOSE</div>
<div style="position:absolute;left:541.5px;top:322.1146px;width:200px;text-align:center;font-size:11px;line-height:11px;color:#1a1a1a;font-weight:normal;white-space:nowrap;-webkit-text-stroke:0.25px #1a1a1a;transform:scaleX(1.072);">100 %</div>
<div style="position:absolute;left:541.5px;top:392.2146px;width:200px;text-align:center;font-size:10px;line-height:10px;color:#1a1a1a;font-weight:normal;white-space:nowrap;-webkit-text-stroke:0.25px #1a1a1a;transform:scaleX(1.031);">GATE LEN</div>
<div style="position:absolute;left:0px;top:451px;width:676px;height:56px;background:linear-gradient(#dadada,#e2e2e2 30%,#e0e0e0 70%,#dcdcdc);"></div>
<svg style="left:0;top:440px" width="676" height="14" viewBox="0 440 676 14"><rect x="0" y="443.6" width="676" height="1.6" fill="#f2f2f2"/><rect x="0" y="445.4" width="676" height="1.5" fill="#383838"/><rect x="0" y="446.9" width="676" height="1.9" fill="#d8d8d8"/><rect x="0" y="448.8" width="676" height="1.5" fill="#444"/><rect x="0" y="450.3" width="676" height="1.7" fill="#f0f0f0"/></svg>
<div style="position:absolute;left:-35.8px;top:457.5px;width:200px;text-align:center;font-size:11px;line-height:11px;color:#555;font-weight:normal;white-space:nowrap;">M1</div>
<div style="position:absolute;left:3.0px;top:457.5px;width:200px;text-align:center;font-size:11px;line-height:11px;color:#555;font-weight:normal;white-space:nowrap;">M2</div>
<div style="position:absolute;left:41.19999999999999px;top:457.5px;width:200px;text-align:center;font-size:11px;line-height:11px;color:#555;font-weight:normal;white-space:nowrap;">M3</div>
<div style="position:absolute;left:79.5px;top:457.5px;width:200px;text-align:center;font-size:11px;line-height:11px;color:#555;font-weight:normal;white-space:nowrap;">M4</div>
<div style="position:absolute;left:118.0px;top:457.5px;width:200px;text-align:center;font-size:11px;line-height:11px;color:#555;font-weight:normal;white-space:nowrap;">M5</div>
<div style="position:absolute;left:218.0px;top:456.85px;width:200px;text-align:center;font-size:11.5px;line-height:11.5px;color:#10a6dc;font-weight:normal;white-space:nowrap;text-shadow:0 0.5px 0.8px #035;-webkit-text-stroke:0.3px #10a6dc;transform:scaleX(1.022);">Rec More</div>
<div style="position:absolute;left:38px;top:476.6px;width:207px;height:24.4px;border-top:1.5px solid #666;border-bottom:1px solid #a8a8a8;background:linear-gradient(rgba(0,0,0,0.08),rgba(255,255,255,0) 30%,rgba(255,255,255,0) 70%,rgba(0,0,0,0.06)),linear-gradient(90deg,#c6c6c6 0%,#d4d4d4 12%,#f8f8f8 26%,#fafafa 32%,#e4e4e4 42%,#d6d6d6 52%,#e6e6e6 62%,#f8f8f8 72%,#f6f6f6 78%,#dadada 90%,#c8c8c8 100%);"></div>
<div style="position:absolute;left:6.1px;top:476.4px;width:33.699999999999996px;height:25.100000000000023px;border:1.3px solid #454545;border-radius:3.5px;background:#8c8c8c;"></div>
<div style="position:absolute;left:243.2px;top:476.3px;width:33.69999999999999px;height:25.19999999999999px;border:1.3px solid #454545;border-radius:3.5px;background:#8c8c8c;"></div>
<div style="position:absolute;left:285.3px;top:476.6px;width:66.6px;height:24.9px;border:1.3px solid #454545;border-radius:4px;background:#8c8c8c;"><div style="position:absolute;left:31.9px;top:0;width:1.2px;height:100%;background:#3a3a3a;"></div></div>
<div style="position:absolute;left:201.8px;top:484.4px;width:200px;text-align:center;font-size:10px;line-height:10px;color:#f4f4f4;font-weight:normal;white-space:nowrap;text-shadow:0 0.8px 1px #222;">Alt</div>
<div style="position:absolute;left:234.3px;top:484.4px;width:200px;text-align:center;font-size:10px;line-height:10px;color:#f4f4f4;font-weight:normal;white-space:nowrap;text-shadow:0 0.8px 1px #222;">Dub</div>
<div style="position:absolute;left:359.4px;top:462.5px;width:59px;height:35.6px;border:1.2px solid #555;border-radius:4px;background:linear-gradient(#e0e0e0,#d8d8d8);"><div style="position:absolute;left:27.6px;top:0;width:1.2px;height:100%;background:#3a3a3a;"></div></div>
<div style="position:absolute;left:427.4px;top:462.5px;width:241.7px;height:35.6px;border:1.2px solid #555;border-radius:5px;background:linear-gradient(#e0e0e0,#d8d8d8);"><div style="position:absolute;left:38.8px;top:0;width:1.2px;height:100%;background:#3a3a3a;"></div><div style="position:absolute;left:78.70000000000003px;top:0;width:1.2px;height:100%;background:#3a3a3a;"></div><div style="position:absolute;left:119.50000000000004px;top:0;width:1.2px;height:100%;background:#3a3a3a;"></div><div style="position:absolute;left:159.7px;top:0;width:1.2px;height:100%;background:#3a3a3a;"></div><div style="position:absolute;left:199.90000000000003px;top:0;width:1.2px;height:100%;background:#3a3a3a;"></div></div>
<svg style="left:0;top:0" width="676" height="507" viewBox="0 0 676 507"><path d="M425.92 25.35 A6.7 6.7 0 1 1 430.44 35.50 M436.28 50.45 A6.7 6.7 0 1 0 431.76 60.60" fill="none" stroke="#383838" stroke-width="4"/><path d="M422.3 24.3 L430 27.3 L423.4 31.8 Z M440.2 50.2 L432 53.3 L438.5 58 Z" fill="#f2f2f2" stroke="#383838" stroke-width="1.1" stroke-linejoin="round"/><path d="M425.92 25.35 A6.7 6.7 0 1 1 430.44 35.50 M436.28 50.45 A6.7 6.7 0 1 0 431.76 60.60" fill="none" stroke="#f2f2f2" stroke-width="2.4"/><path d="M446.88 125.95 L460.27 125.95 L453.57 139.15 Z" fill="#dedede" stroke="#2a2a2a" stroke-width="1.1" stroke-linejoin="miter"/><path d="M487.02 125.95 L493.72 139.15 L480.32 139.15 Z" fill="#dedede" stroke="#2a2a2a" stroke-width="1.1" stroke-linejoin="miter"/><path d="M96.28 218.80 L109.48 218.80 L102.88 231.20 Z" fill="#c8c8c8" stroke="#2a2a2a" stroke-width="1.1" stroke-linejoin="miter"/><path d="M136.82 218.80 L143.42 231.20 L130.22 231.20 Z" fill="#c8c8c8" stroke="#2a2a2a" stroke-width="1.1" stroke-linejoin="miter"/><path d="M96.28 258.75 L109.48 258.75 L102.88 271.15 Z" fill="#c8c8c8" stroke="#2a2a2a" stroke-width="1.1" stroke-linejoin="miter"/><path d="M136.82 258.75 L143.42 271.15 L130.22 271.15 Z" fill="#c8c8c8" stroke="#2a2a2a" stroke-width="1.1" stroke-linejoin="miter"/><defs><radialGradient id="sh18961925" cx="50%" cy="50%" r="50%"><stop offset="75%" stop-color="#000" stop-opacity="0.4"/><stop offset="100%" stop-color="#000" stop-opacity="0"/></radialGradient></defs><circle cx="189.60" cy="195.30" r="25.30" fill="url(#sh18961925)"/><circle cx="189.60" cy="192.50" r="22.3" fill="#070707"/><circle cx="189.60" cy="192.50" r="18.20" fill="none" stroke="#1e1e1e" stroke-width="1.4"/><circle cx="189.60" cy="192.50" r="21.80" fill="none" stroke="#262626" stroke-width="1"/><circle cx="189.60" cy="192.50" r="16.9" fill="#4ccb62"/><line x1="189.60" y1="192.50" x2="204.12" y2="188.74" stroke="#0a0a0a" stroke-width="2.7" stroke-linecap="round"/><defs><radialGradient id="sh25021925" cx="50%" cy="50%" r="50%"><stop offset="75%" stop-color="#000" stop-opacity="0.4"/><stop offset="100%" stop-color="#000" stop-opacity="0"/></radialGradient></defs><circle cx="250.20" cy="195.30" r="25.30" fill="url(#sh25021925)"/><circle cx="250.20" cy="192.50" r="22.3" fill="#070707"/><circle cx="250.20" cy="192.50" r="18.20" fill="none" stroke="#1e1e1e" stroke-width="1.4"/><circle cx="250.20" cy="192.50" r="21.80" fill="none" stroke="#262626" stroke-width="1"/><circle cx="250.20" cy="192.50" r="16.9" fill="#e57b3e"/><line x1="250.20" y1="192.50" x2="257.77" y2="205.45" stroke="#0a0a0a" stroke-width="2.7" stroke-linecap="round"/><circle cx="205.90" cy="266.05" r="11.2" fill="rgba(0,0,0,0.5)"/><circle cx="205.00" cy="264.75" r="10.6" fill="#fafafa"/><circle cx="205.00" cy="264.75" r="9" fill="#52dd6a"/><circle cx="467.30" cy="180.15" r="11.2" fill="rgba(0,0,0,0.5)"/><circle cx="466.40" cy="178.85" r="10.6" fill="#fafafa"/><circle cx="466.40" cy="178.85" r="9" fill="#e8803f"/><circle cx="467.30" cy="223.15" r="11.2" fill="rgba(0,0,0,0.5)"/><circle cx="466.40" cy="221.85" r="10.6" fill="#fafafa"/><circle cx="466.40" cy="221.85" r="9" fill="#54e06e"/><circle cx="437.90" cy="266.05" r="11.2" fill="rgba(0,0,0,0.5)"/><circle cx="437.00" cy="264.75" r="10.6" fill="#fafafa"/><circle cx="437.00" cy="264.75" r="9" fill="#33b8ea"/><path d="M548.55 175.75 L561.75 175.75 L555.15 188.15 Z" fill="#c8c8c8" stroke="#2a2a2a" stroke-width="1.1" stroke-linejoin="miter"/><path d="M589.25 175.75 L595.85 188.15 L582.65 188.15 Z" fill="#c8c8c8" stroke="#2a2a2a" stroke-width="1.1" stroke-linejoin="miter"/><path d="M548.55 242.95 L561.75 242.95 L555.15 255.35 Z" fill="#c8c8c8" stroke="#2a2a2a" stroke-width="1.1" stroke-linejoin="miter"/><path d="M589.25 242.95 L595.85 255.35 L582.65 255.35 Z" fill="#c8c8c8" stroke="#2a2a2a" stroke-width="1.1" stroke-linejoin="miter"/><defs><radialGradient id="sh64172100" cx="50%" cy="50%" r="50%"><stop offset="75%" stop-color="#000" stop-opacity="0.4"/><stop offset="100%" stop-color="#000" stop-opacity="0"/></radialGradient></defs><circle cx="641.70" cy="212.80" r="25.30" fill="url(#sh64172100)"/><circle cx="641.70" cy="210.00" r="22.3" fill="#070707"/><circle cx="641.70" cy="210.00" r="18.20" fill="none" stroke="#1e1e1e" stroke-width="1.4"/><circle cx="641.70" cy="210.00" r="21.80" fill="none" stroke="#262626" stroke-width="1"/><circle cx="641.70" cy="210.00" r="16.9" fill="#4ccb62"/><line x1="641.70" y1="210.00" x2="656.33" y2="206.68" stroke="#0a0a0a" stroke-width="2.7" stroke-linecap="round"/><path d="M96.28 368.80 L109.48 368.80 L102.88 381.20 Z" fill="#c8c8c8" stroke="#2a2a2a" stroke-width="1.1" stroke-linejoin="miter"/><path d="M136.82 368.80 L143.42 381.20 L130.22 381.20 Z" fill="#c8c8c8" stroke="#2a2a2a" stroke-width="1.1" stroke-linejoin="miter"/><path d="M96.28 410.45 L109.48 410.45 L102.88 422.85 Z" fill="#c8c8c8" stroke="#2a2a2a" stroke-width="1.1" stroke-linejoin="miter"/><path d="M136.82 410.45 L143.42 422.85 L130.22 422.85 Z" fill="#c8c8c8" stroke="#2a2a2a" stroke-width="1.1" stroke-linejoin="miter"/><defs><radialGradient id="sh18963447" cx="50%" cy="50%" r="50%"><stop offset="75%" stop-color="#000" stop-opacity="0.4"/><stop offset="100%" stop-color="#000" stop-opacity="0"/></radialGradient></defs><circle cx="189.60" cy="347.50" r="25.30" fill="url(#sh18963447)"/><circle cx="189.60" cy="344.70" r="22.3" fill="#070707"/><circle cx="189.60" cy="344.70" r="18.20" fill="none" stroke="#1e1e1e" stroke-width="1.4"/><circle cx="189.60" cy="344.70" r="21.80" fill="none" stroke="#262626" stroke-width="1"/><circle cx="189.60" cy="344.70" r="16.9" fill="#30acdc"/><line x1="189.60" y1="344.70" x2="182.33" y2="331.58" stroke="#0a0a0a" stroke-width="2.7" stroke-linecap="round"/><defs><radialGradient id="sh25023447" cx="50%" cy="50%" r="50%"><stop offset="75%" stop-color="#000" stop-opacity="0.4"/><stop offset="100%" stop-color="#000" stop-opacity="0"/></radialGradient></defs><circle cx="250.20" cy="347.50" r="25.30" fill="url(#sh25023447)"/><circle cx="250.20" cy="344.70" r="22.3" fill="#070707"/><circle cx="250.20" cy="344.70" r="18.20" fill="none" stroke="#1e1e1e" stroke-width="1.4"/><circle cx="250.20" cy="344.70" r="21.80" fill="none" stroke="#262626" stroke-width="1"/><circle cx="250.20" cy="344.70" r="16.9" fill="#e57b3e"/><line x1="250.20" y1="344.70" x2="250.20" y2="329.70" stroke="#0a0a0a" stroke-width="2.7" stroke-linecap="round"/><circle cx="235.30" cy="417.65" r="11.2" fill="rgba(0,0,0,0.5)"/><circle cx="234.40" cy="416.35" r="10.6" fill="#fafafa"/><circle cx="234.40" cy="416.35" r="9" fill="#38c0f0"/><circle cx="467.30" cy="331.75" r="11.2" fill="rgba(0,0,0,0.5)"/><circle cx="466.40" cy="330.45" r="10.6" fill="#fafafa"/><circle cx="466.40" cy="330.45" r="9" fill="#e8803f"/><circle cx="437.90" cy="374.75" r="11.2" fill="rgba(0,0,0,0.5)"/><circle cx="437.00" cy="373.45" r="10.6" fill="#fafafa"/><circle cx="437.00" cy="373.45" r="9" fill="#52dd6a"/><circle cx="467.30" cy="417.65" r="11.2" fill="rgba(0,0,0,0.5)"/><circle cx="466.40" cy="416.35" r="10.6" fill="#fafafa"/><circle cx="466.40" cy="416.35" r="9" fill="#38c0f0"/><path d="M548.55 327.35 L561.75 327.35 L555.15 339.75 Z" fill="#c8c8c8" stroke="#2a2a2a" stroke-width="1.1" stroke-linejoin="miter"/><path d="M589.25 327.35 L595.85 339.75 L582.65 339.75 Z" fill="#c8c8c8" stroke="#2a2a2a" stroke-width="1.1" stroke-linejoin="miter"/><path d="M548.55 394.55 L561.75 394.55 L555.15 406.95 Z" fill="#c8c8c8" stroke="#2a2a2a" stroke-width="1.1" stroke-linejoin="miter"/><path d="M589.25 394.55 L595.85 406.95 L582.65 406.95 Z" fill="#c8c8c8" stroke="#2a2a2a" stroke-width="1.1" stroke-linejoin="miter"/><defs><radialGradient id="sh64173606" cx="50%" cy="50%" r="50%"><stop offset="75%" stop-color="#000" stop-opacity="0.4"/><stop offset="100%" stop-color="#000" stop-opacity="0"/></radialGradient></defs><circle cx="641.70" cy="363.41" r="25.30" fill="url(#sh64173606)"/><circle cx="641.70" cy="360.61" r="22.3" fill="#070707"/><circle cx="641.70" cy="360.61" r="18.20" fill="none" stroke="#1e1e1e" stroke-width="1.4"/><circle cx="641.70" cy="360.61" r="21.80" fill="none" stroke="#262626" stroke-width="1"/><circle cx="641.70" cy="360.61" r="16.9" fill="#30acdc"/><line x1="641.70" y1="360.61" x2="641.70" y2="345.61" stroke="#0a0a0a" stroke-width="2.7" stroke-linecap="round"/><line x1="11.2" y1="480" x2="11.2" y2="498" stroke="#555" stroke-width="2.6"/><line x1="11.2" y1="480.5" x2="11.2" y2="497.5" stroke="#f4f4f4" stroke-width="1.5"/><path d="M16.9 492.8 V486.40000000000003 Q16.9 482.6 20.7 482.6 H28.499999999999993 M33.8 485.20000000000005 V491.4 Q33.8 495.2 29.999999999999996 495.2 H22.4" fill="none" stroke="#555" stroke-width="2.6"/><path d="M32.599999999999994 482.6 L27.999999999999993 480.3 L27.999999999999993 484.90000000000003 Z M18.299999999999997 495.2 L22.9 492.9 L22.9 497.5 Z" fill="#555" stroke="#555" stroke-width="1.1" stroke-linejoin="round"/><path d="M16.9 492.8 V486.40000000000003 Q16.9 482.6 20.7 482.6 H28.499999999999993 M33.8 485.20000000000005 V491.4 Q33.8 495.2 29.999999999999996 495.2 H22.4" fill="none" stroke="#f6f6f6" stroke-width="1.5"/><path d="M32.599999999999994 482.6 L27.999999999999993 480.3 L27.999999999999993 484.90000000000003 Z M18.299999999999997 495.2 L22.9 492.9 L22.9 497.5 Z" fill="#f6f6f6"/><line x1="271.6" y1="480" x2="271.6" y2="498" stroke="#555" stroke-width="2.6"/><line x1="271.6" y1="480.5" x2="271.6" y2="497.5" stroke="#f4f4f4" stroke-width="1.5"/><path d="M249.3 492.8 V486.40000000000003 Q249.3 482.6 253.10000000000002 482.6 H260.9 M266.2 485.20000000000005 V491.4 Q266.2 495.2 262.4 495.2 H254.8" fill="none" stroke="#555" stroke-width="2.6"/><path d="M265.0 482.6 L260.4 480.3 L260.4 484.90000000000003 Z M250.70000000000002 495.2 L255.3 492.9 L255.3 497.5 Z" fill="#555" stroke="#555" stroke-width="1.1" stroke-linejoin="round"/><path d="M249.3 492.8 V486.40000000000003 Q249.3 482.6 253.10000000000002 482.6 H260.9 M266.2 485.20000000000005 V491.4 Q266.2 495.2 262.4 495.2 H254.8" fill="none" stroke="#f6f6f6" stroke-width="1.5"/><path d="M265.0 482.6 L260.4 480.3 L260.4 484.90000000000003 Z M250.70000000000002 495.2 L255.3 492.9 L255.3 497.5 Z" fill="#f6f6f6"/><defs><linearGradient id="mg" x1="0" y1="0" x2="0" y2="1"><stop offset="0" stop-color="#a4a4a4"/><stop offset="1" stop-color="#7c7c7c"/></linearGradient></defs><path d="M371.9 472.7 L377.6 472.7 L380.9 487.6 L368.6 487.6 Z" fill="url(#mg)"/><path d="M373.4 475.2 L376.1 475.2 L377.2 481.5 L372.3 481.5 Z" fill="#cfcfcf"/><line x1="373" y1="474.2" x2="376.6" y2="474.2" stroke="#222" stroke-width="1.3"/><line x1="368.4" y1="487.9" x2="381.1" y2="487.9" stroke="#111" stroke-width="1.4"/><line x1="368" y1="473.8" x2="375.7" y2="483.6" stroke="#111" stroke-width="1.7" stroke-linecap="round"/><path d="M395.2 484.3 V477.9 Q395.2 473.7 399.4 473.7 H405.90000000000003 M411.8 476.3 V482.5 Q411.8 486.7 407.6 486.7 H401.29999999999995" fill="none" stroke="#333" stroke-width="1.9"/><path d="M410.6 473.7 L405.40000000000003 471.2 L405.40000000000003 476.2 Z M396.59999999999997 486.7 L401.79999999999995 484.2 L401.79999999999995 489.2 Z" fill="#333"/><g stroke="#333" stroke-width="2" fill="none" stroke-linecap="round" stroke-linejoin="round"><line x1="443.1" y1="474.8" x2="443.1" y2="485.2"/><path d="M452 474.2 L446.5 480.4 L452 486.6"/><path d="M486.5 474.6 L481 480.8 L486.5 487"/><path d="M494.3 474.6 L488.8 480.8 L494.3 487"/><path d="M520.3 474.6 L525.8 480.8 L520.3 487"/><path d="M528.1 474.6 L533.6 480.8 L528.1 487"/></g><rect x="561.8" y="474.2" width="13" height="12.8" rx="1" fill="#3c3c3c"/><path d="M601.8 472.8 L615.1 480.35 L601.8 487.9 Z" fill="#3a3a3a"/><circle cx="648.7" cy="480.3" r="6.6" fill="#3a3a3a"/></svg>
</body></html>
